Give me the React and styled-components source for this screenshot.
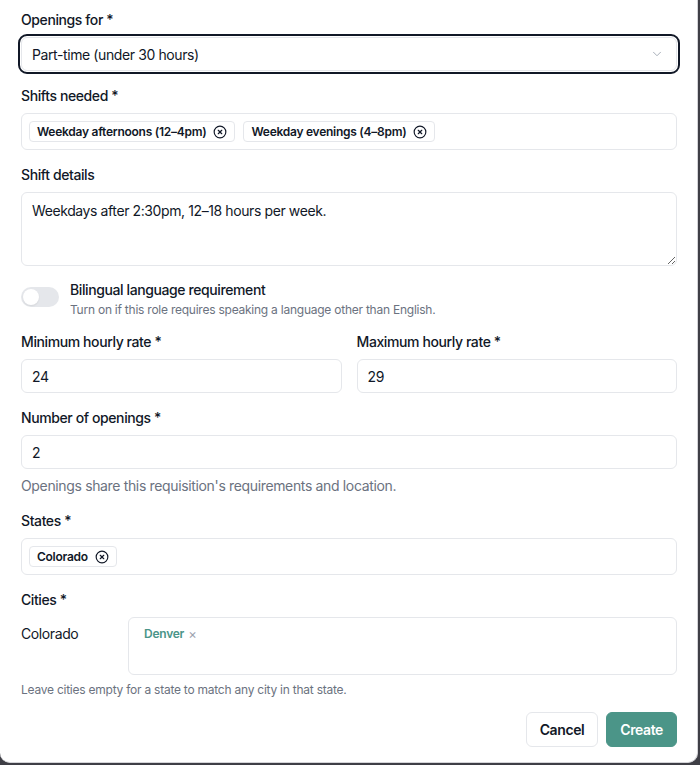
import React from "react";
import styled, { createGlobalStyle } from "styled-components";
import { ChevronDown, CircleX } from "lucide-react";

const Global = createGlobalStyle`
  html, body { margin: 0; padding: 0; background: #3f3f46; }
  body { font-family: Inter, "Noto Sans", sans-serif; color: #111827; letter-spacing: -0.025em; }
  * { box-sizing: border-box; }
  input, textarea, button { letter-spacing: inherit; }
`;

const Dialog = styled.div`
  width: 698px;
  height: 763px;
  background: #ffffff;
  border-right: 1px solid #d4d4d8;
  border-bottom: 1px solid #d4d4d8;
  border-radius: 0 0 10px 10px;
  padding: 10px 20px 0 21px;
  display: flex;
  flex-direction: column;
  gap: 15px;
`;

const Field = styled.div`
  display: flex;
  flex-direction: column;
  gap: 7px;
`;

const Label = styled.div`
  font-size: 14px;
  line-height: 20px;
  font-weight: 500;
  color: #111827;
`;

const SelectBox = styled.div`
  height: 34px;
  border: 1px solid #e5e7eb;
  border-radius: 6px;
  outline: 2px solid #111827;
  outline-offset: 1px;
  display: flex;
  align-items: center;
  justify-content: space-between;
  padding: 0 12px 0 10px;
  font-size: 14px;
  color: #111827;
`;

const Input = styled.input`
  height: 34px;
  width: 100%;
  border: 1px solid #e5e7eb;
  border-radius: 6px;
  padding: 0 10px;
  font-family: inherit;
  font-size: 14px;
  color: #111827;
  background: #fff;
  outline: none;
`;

const TagBox = styled.div`
  min-height: 37px;
  border: 1px solid #e5e7eb;
  border-radius: 6px;
  padding: 7px;
  display: flex;
  flex-wrap: wrap;
  gap: 8px;
`;

const Chip = styled.span`
  display: inline-flex;
  align-items: center;
  gap: 7px;
  height: 21px;
  padding: 0 7px 0 7px;
  border: 1px solid #e5e7eb;
  border-radius: 4px;
  background: #fff;
  font-size: 12px;
  font-weight: 600;
  letter-spacing: -0.022em;
  color: #111827;
  svg { display: block; }
`;

const TextArea = styled.textarea`
  height: 74px;
  width: 100%;
  border: 1px solid #e5e7eb;
  border-radius: 6px;
  padding: 8px 10px;
  font-family: inherit;
  font-size: 14px;
  line-height: 20px;
  color: #111827;
  outline: none;
  resize: vertical;
  display: block;
`;

const ToggleRow = styled.div`
  display: flex;
  align-items: flex-start;
  gap: 11px;
  padding-top: 6px;
  margin-bottom: -1px;
`;

const Switch = styled.span`
  width: 38px;
  height: 20px;
  border-radius: 10px;
  background: #e5e7eb;
  padding: 2px;
  display: flex;
  flex-shrink: 0;
  &::after {
    content: "";
    width: 16px;
    height: 16px;
    border-radius: 50%;
    background: #fff;
    box-shadow: 0 1px 2px rgba(0,0,0,0.08);
  }
`;

const ToggleText = styled.div`
  display: flex;
  flex-direction: column;
  gap: 2px;
  margin-top: -7px;
`;

const SubText = styled.div`
  font-size: ${(p) => p.$size ?? 12}px;
  line-height: ${(p) => (p.$size === 14 ? 20 : 16)}px;
  letter-spacing: ${(p) => (p.$size === 14 ? "-0.025em" : "-0.02em")};
  color: #6b7280;
`;

const Row2 = styled.div`
  display: grid;
  grid-template-columns: 1fr 1fr;
  gap: 15px;
`;

const CityGrid = styled.div`
  display: grid;
  grid-template-columns: 96px 1fr;
  gap: 11px;
`;

const CityState = styled.div`
  font-size: 14px;
  line-height: 20px;
  padding-top: 7px;
  color: #111827;
`;

const CityBox = styled.div`
  height: 58px;
  border: 1px solid #e5e7eb;
  border-radius: 6px;
  padding: 8px 15px;
  display: flex;
  align-items: flex-start;
`;

const CityChip = styled.span`
  font-size: 12px;
  line-height: 16px;
  font-weight: 600;
  letter-spacing: -0.02em;
  color: #4a9488;
  display: inline-flex;
  align-items: center;
  gap: 4px;
  span { color: #9ca3af; font-weight: 400; font-size: 13px; }
`;

const Footer = styled.div`
  display: flex;
  justify-content: flex-end;
  gap: 8px;
  margin-top: -1px;
`;

const Button = styled.button`
  height: 35px;
  padding: 0 13px;
  border-radius: 6px;
  border: 1px solid ${(p) => (p.$primary ? "#4b9588" : "#e5e7eb")};
  background: ${(p) => (p.$primary ? "#4b9588" : "#ffffff")};
  color: ${(p) => (p.$primary ? "#ffffff" : "#111827")};
  font-family: inherit;
  font-size: 14px;
  font-weight: 600;
`;

const XIcon = () => <CircleX size={14} strokeWidth={2} color="#111827" />;

export default function App() {
  return (
    <>
      <Global />
      <Dialog>
        <Field>
          <Label>Openings for *</Label>
          <SelectBox>
            <span>Part-time (under 30 hours)</span>
            <ChevronDown size={14} color="#9ca3af" strokeWidth={1.5} />
          </SelectBox>
        </Field>
        <Field>
          <Label>Shifts needed *</Label>
          <TagBox>
            <Chip>Weekday afternoons (12–4pm) <XIcon /></Chip>
            <Chip>Weekday evenings (4–8pm) <XIcon /></Chip>
          </TagBox>
        </Field>
        <Field>
          <Label>Shift details</Label>
          <TextArea defaultValue="Weekdays after 2:30pm, 12–18 hours per week." />
        </Field>
        <ToggleRow>
          <Switch />
          <ToggleText>
            <Label>Bilingual language requirement</Label>
            <SubText>Turn on if this role requires speaking a language other than English.</SubText>
          </ToggleText>
        </ToggleRow>
        <Row2>
          <Field>
            <Label>Minimum hourly rate *</Label>
            <Input defaultValue="24" />
          </Field>
          <Field>
            <Label>Maximum hourly rate *</Label>
            <Input defaultValue="29" />
          </Field>
        </Row2>
        <Field>
          <Label>Number of openings *</Label>
          <Input defaultValue="2" />
          <SubText $size={14}>Openings share this requisition's requirements and location.</SubText>
        </Field>
        <Field>
          <Label>States *</Label>
          <TagBox>
            <Chip>Colorado <XIcon /></Chip>
          </TagBox>
        </Field>
        <Field>
          <Label>Cities *</Label>
          <CityGrid>
            <CityState>Colorado</CityState>
            <CityBox>
              <CityChip>Denver <span>×</span></CityChip>
            </CityBox>
          </CityGrid>
          <SubText>Leave cities empty for a state to match any city in that state.</SubText>
        </Field>
        <Footer>
          <Button>Cancel</Button>
          <Button $primary>Create</Button>
        </Footer>
      </Dialog>
    </>
  );
}
